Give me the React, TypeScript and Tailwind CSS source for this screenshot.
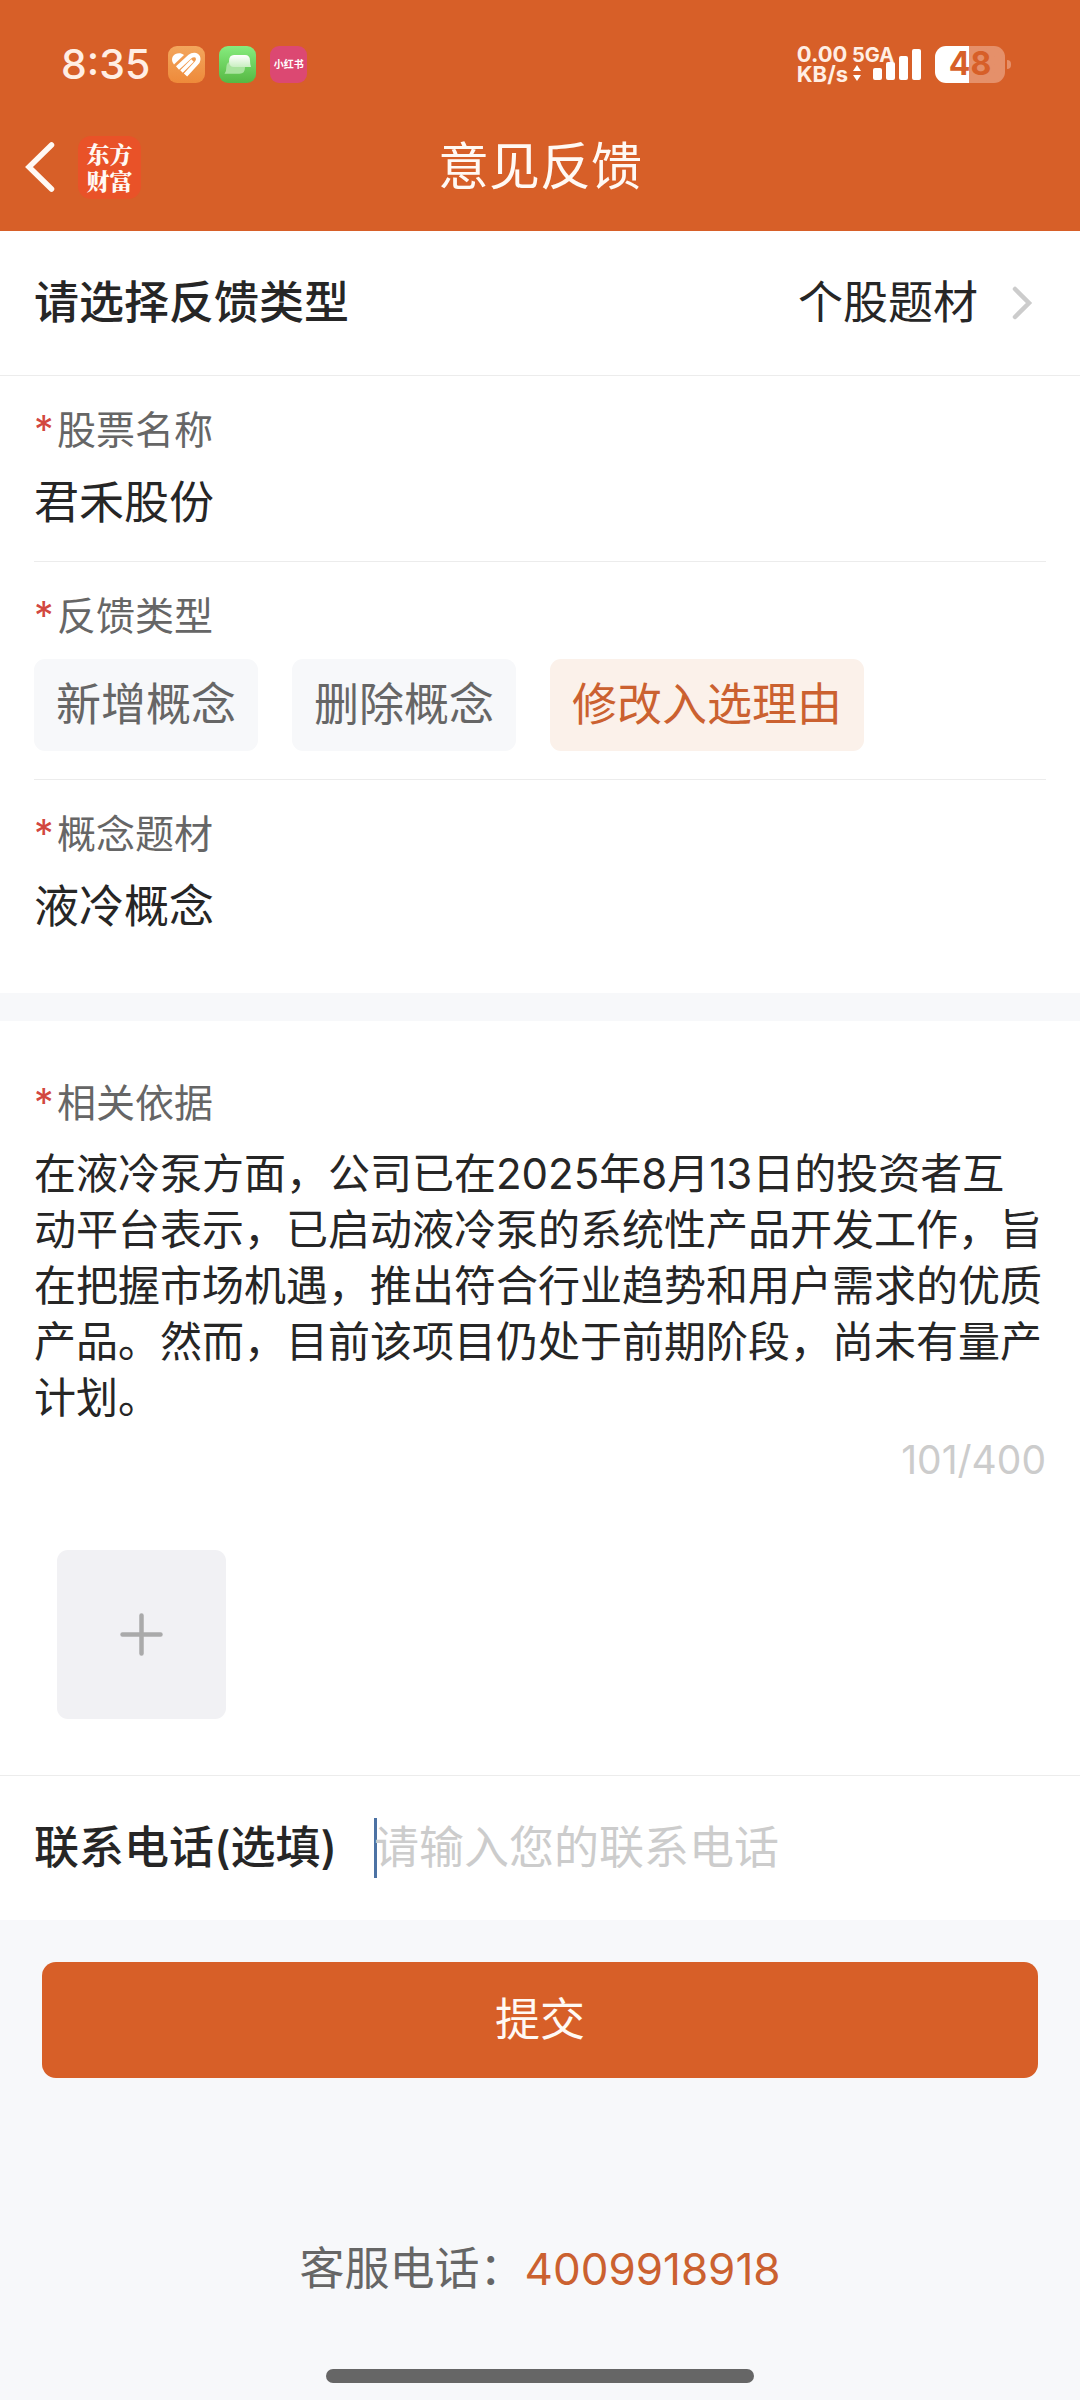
import { useState, type ReactNode } from 'react'
import { clsx } from 'clsx'

const REASON =
  '在液冷泵方面，公司已在2025年8月13日的投资者互动平台表示，已启动液冷泵的系统性产品开发工作，旨在把握市场机遇，推出符合行业趋势和用户需求的优质产品。然而，目前该项目仍处于前期阶段，尚未有量产计划。'

const KINDS = ['新增概念', '删除概念', '修改入选理由']

function HealthIcon() {
  return (
    <svg viewBox="0 0 37 37" className="size-[37px]" aria-hidden="true">
      <defs>
        <linearGradient id="health" x1="0" y1="0" x2="0" y2="1">
          <stop offset="0" stopColor="#f3a65d" />
          <stop offset="1" stopColor="#ee8a3a" />
        </linearGradient>
      </defs>
      <rect width="37" height="37" rx="9" fill="url(#health)" />
      <path d="M6 18.500C3 15 3.500 10.500 7 8.300 10 6.500 13.500 6.800 16 9Z" fill="#fff" />
      <path d="M9.500 22 22 10.500C24.500 8.300 28.500 8.300 29.800 11 30.800 13.300 30 15.500 28.500 17L17.500 29" fill="none" stroke="#fff" strokeWidth="4.500" />
      <path d="M13.500 25.500 24.500 14.500" fill="none" stroke="#fff" strokeWidth="3.500" />
    </svg>
  )
}

function MessagesIcon() {
  return (
    <svg viewBox="0 0 37 37" className="size-[37px]" aria-hidden="true">
      <defs>
        <linearGradient id="msg" x1="0" y1="0" x2="0" y2="1">
          <stop offset="0" stopColor="#86ec7e" />
          <stop offset="1" stopColor="#56b843" />
        </linearGradient>
        <linearGradient id="bubble" x1="0" y1="0" x2="0" y2="1">
          <stop offset="0" stopColor="#fff" />
          <stop offset="1" stopColor="#c9efc2" />
        </linearGradient>
      </defs>
      <rect width="37" height="37" rx="9" fill="url(#msg)" />
      <path d="M12.500 15.500H21Q26 15.500 26 21.500 26 27.700 20.500 27.700H5.500Q7.500 25.500 7.300 21.500 7.500 15.500 12.500 15.500Z" fill="#a9e39e" />
      <path d="M15 9H26Q31 9 31 14.500 31 19 32 21H15Q10 21 10 15 10 9 15 9Z" fill="url(#bubble)" />
    </svg>
  )
}

function StatusBar() {
  return (
    <div className="flex h-[103px] items-center pt-[25px] pr-[75px] pl-[61px] text-[#ffeee4]">
      <span className="text-[41px] leading-none font-medium">8:35</span>
      <div className="ml-[18px] flex gap-[14px]">
        <HealthIcon />
        <MessagesIcon />
        <span className="flex size-[37px] items-center justify-center rounded-[9px] bg-[#dc4872] text-[10px] leading-none font-bold whitespace-nowrap text-white">
          小红书
        </span>
      </div>

      <div className="ml-auto flex items-center">
        <div className="text-[22px] leading-[20px] font-bold">
          <p>0.00</p>
          <p>KB/s</p>
        </div>
        <div className="relative ml-[4px] h-[37px] w-[70px]">
          <span className="absolute top-0 left-0 text-[20px] leading-[18px] font-bold">5GA</span>
          <svg viewBox="0 0 70 37" className="absolute inset-0 size-full" fill="#fff" aria-hidden="true">
            <path d="M1 25 5 19 9 25ZM1 29H9L5 35Z" />
            <rect x="21" y="22" width="9" height="12" rx="2" />
            <rect x="34" y="16" width="9" height="18" rx="2" />
            <rect x="47" y="10" width="9" height="24" rx="2" />
            <rect x="60" y="3" width="9" height="31" rx="2" />
          </svg>
        </div>
        <div className="ml-[13px] flex h-[37px] w-[70px] items-center justify-center rounded-[11px] bg-linear-to-r from-white from-49% to-[#e5906a] to-49% text-[32px] leading-none font-bold text-[#d75f28]">
          48
        </div>
        <span className="ml-[2px] -mr-[6px] h-[9px] w-[4px] rounded-r-full bg-[#e5906a]" />
      </div>
    </div>
  )
}

function NavBar() {
  return (
    <div className="relative flex h-32 items-center px-[25px] text-[#fff9f4]">
      <button type="button" aria-label="返回">
        <svg viewBox="0 0 30 50" className="h-[50px] w-[30px]" fill="none" stroke="currentColor" strokeWidth="5.500" strokeLinecap="round" aria-hidden="true">
          <path d="M26.500 3 4 25 26.500 47" />
        </svg>
      </button>
      <div className="ml-[23px] flex size-[63px] flex-col items-center justify-center rounded-[13px] bg-[#e95228] font-['Noto_Serif_CJK_SC','Noto_Sans_CJK_SC',sans-serif] text-[23px] leading-[27px] font-black">
        <span>东方</span>
        <span>财富</span>
      </div>
      <h1 className="pointer-events-none absolute inset-x-0 text-center text-[51px] leading-[60px]">意见反馈</h1>
    </div>
  )
}

function FieldLabel({ htmlFor, children }: { htmlFor: string; children: ReactNode }) {
  return (
    <label htmlFor={htmlFor} id={`${htmlFor}-label`} className="flex text-[39px] leading-[56px] text-[#666]">
      <span className="w-[23px] text-[#d2483f]">*</span>
      {children}
    </label>
  )
}

export default function App() {
  const [stock, setStock] = useState('君禾股份')
  const [kind, setKind] = useState('修改入选理由')
  const [concept, setConcept] = useState('液冷概念')
  const [reason, setReason] = useState(REASON)
  const [phone, setPhone] = useState('')

  return (
    <div className="flex min-h-screen flex-col bg-[#f7f8fa] font-['Inter','Noto_Sans_CJK_SC',sans-serif] text-[#262626]">
      <header className="bg-[#d75f28]">
        <StatusBar />
        <NavBar />
      </header>

      <form className="flex flex-col" onSubmit={(e) => e.preventDefault()}>
        <div className="bg-white">
          <div className="flex h-[145px] items-center justify-between border-b border-[#ececec] pr-[47px] pl-[34px] text-[45px] leading-[60px]">
            <span id="topic" className="font-medium">请选择反馈类型</span>
            <button type="button" aria-labelledby="topic" className="flex items-center gap-[34px]">
              个股题材
              <svg viewBox="0 0 21 34" className="h-[34px] w-[21px]" fill="none" stroke="#ccc" strokeWidth="4.500" strokeLinecap="round" strokeLinejoin="miter" aria-hidden="true">
                <path d="M3 3 17 17 3 31" />
              </svg>
            </button>
          </div>

          <div className="px-[34px]">
            <div className="flex flex-col gap-[15px] border-b border-[#ececec] pt-[26px] pb-[28px]">
              <FieldLabel htmlFor="stock">股票名称</FieldLabel>
              <input
                id="stock"
                value={stock}
                onChange={(e) => setStock(e.target.value)}
                className="h-[60px] w-full text-[45px] leading-[60px] outline-none"
              />
            </div>

            <div className="flex flex-col gap-[15px] border-b border-[#ececec] pt-[26px] pb-[28px]">
              <FieldLabel htmlFor="kind">反馈类型</FieldLabel>
              <div id="kind" role="group" aria-labelledby="kind-label" className="flex flex-wrap gap-[34px]">
                {KINDS.map((k) => (
                  <button
                    key={k}
                    type="button"
                    aria-pressed={k === kind}
                    onClick={() => setKind(k)}
                    className={clsx(
                      'rounded-[11px] px-[22px] py-4 text-[45px] leading-[60px]',
                      k === kind ? 'bg-[#fbf1ea] text-[#cb6130]' : 'bg-[#f7f8fa] text-[#666]'
                    )}
                  >
                    {k}
                  </button>
                ))}
              </div>
            </div>

            <div className="flex flex-col gap-[15px] pt-[26px] pb-[56px]">
              <FieldLabel htmlFor="concept">概念题材</FieldLabel>
              <input
                id="concept"
                value={concept}
                onChange={(e) => setConcept(e.target.value)}
                className="h-[60px] w-full text-[45px] leading-[60px] outline-none"
              />
            </div>
          </div>
        </div>

        <div className="mt-[28px] bg-white">
          <div className="px-[34px] pt-[54px] pb-[56px]">
            <div className="flex flex-col gap-[15px]">
              <FieldLabel htmlFor="reason">相关依据</FieldLabel>
              <textarea
                id="reason"
                rows={5}
                maxLength={400}
                value={reason}
                onChange={(e) => setReason(e.target.value)}
                className="block w-full resize-none overflow-hidden text-[42px] leading-[56px] outline-none"
              />
            </div>
            <p className="mt-1 text-right text-[39px] leading-[60px] text-[#ccc]">101/400</p>
            <button
              type="button"
              aria-label="添加图片"
              className="mt-[60px] ml-[23px] flex size-[169px] items-center justify-center rounded-[11px] bg-[#f1f1f4]"
            >
              <svg viewBox="0 0 43 43" className="size-[43px]" stroke="#aaa" strokeWidth="4.500" strokeLinecap="round" aria-hidden="true">
                <path d="M21.500 2.500V40.500M2.500 21.500H40.500" />
              </svg>
            </button>
          </div>

          <div className="flex h-[145px] items-center border-t border-[#ececec] px-[34px] text-[45px] leading-[60px]">
            <label htmlFor="phone" className="w-[340px] shrink-0 font-medium">联系电话(选填)</label>
            <span className="-mr-[3px] h-[60px] w-[3px] bg-[#4c72a4]" />
            <input
              id="phone"
              type="tel"
              placeholder="请输入您的联系电话"
              value={phone}
              onChange={(e) => setPhone(e.target.value)}
              className="h-[60px] min-w-0 flex-1 outline-none placeholder:text-[#ccc]"
            />
          </div>
        </div>

        <button type="submit" className="mx-[42px] mt-[42px] rounded-[14px] bg-[#d75f28] py-7 text-[45px] leading-[60px] text-[#fff9f4]">
          提交
        </button>
      </form>

      <footer className="flex flex-1 flex-col items-center justify-between pt-[161px] pb-[17px]">
        <p className="text-[45px] leading-[60px] text-[#666]">
          客服电话：
          <a href="tel:4009918918" className="text-[44px] text-[#cb6130]">4009918918</a>
        </p>
        <div className="h-[14px] w-[428px] rounded-full bg-[#666]" />
      </footer>
    </div>
  )
}
